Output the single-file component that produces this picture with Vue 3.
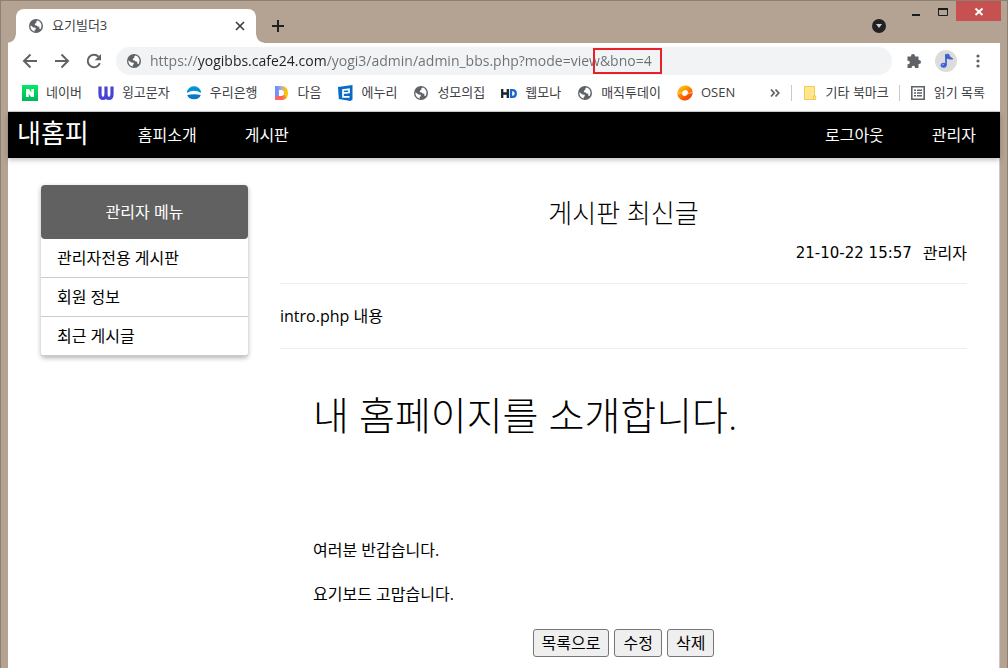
<script setup>
import { ref } from 'vue'

const address = ref('https://yogibbs.cafe24.com/yogi3/admin/admin_bbs.php?mode=view&bno=4')
const bookmarks = [
  { label: '네이버', icon: 'naver' },
  { label: '윙고문자', icon: 'wingo' },
  { label: '우리은행', icon: 'woori' },
  { label: '다음', icon: 'daum' },
  { label: '에누리', icon: 'enuri' },
  { label: '성모의집', icon: 'globe' },
  { label: '웹모나', icon: 'hd' },
  { label: '매직투데이', icon: 'globe' },
  { label: 'OSEN', icon: 'osen' },
]
const adminMenu = ['관리자전용 게시판', '회원 정보', '최근 게시글']
const actions = ['목록으로', '수정', '삭제']
</script>

<template>
  <div class="window">
    <svg class="defs" aria-hidden="true">
      <defs>
        <symbol id="globe" viewBox="0 0 16 16">
          <circle cx="8" cy="8" r="7" fill="#5f6368" />
          <path d="M9.600 2.500 8.200 3.600 8.400 5 7 5.600 6.800 7.200 8.300 7.300 9.600 8.600 11.400 8.800 11.200 10.600 12.400 11.200C14.600 8.400 13.600 3.600 9.600 2.500ZM2.500 7.200 5.400 9.400 7.700 9.700 7.800 11.200 6.600 12 6.800 13.400C4.200 13 2 10.500 2.500 7.200Z" fill="#fff" />
        </symbol>
      </defs>
    </svg>

    <header class="titlebar">
      <div class="tab">
        <svg class="i16"><use href="#globe" /></svg>
        <span class="tab-title">요기빌더3</span>
        <button class="icon-btn" aria-label="탭 닫기">
          <svg class="i16" viewBox="0 0 16 16"><path d="M4 4l8 8M12 4l-8 8" stroke="#3c4043" stroke-width="1.700" /></svg>
        </button>
      </div>
      <button class="icon-btn new-tab" aria-label="새 탭">
        <svg class="i16" viewBox="0 0 16 16"><path d="M8 2v12M2 8h12" stroke="#202124" stroke-width="2" /></svg>
      </button>
      <button class="icon-btn tab-search" aria-label="탭 검색">
        <svg class="i16" viewBox="0 0 16 16"><circle cx="8" cy="8" r="7" fill="#202124" /><path d="M5 6h6l-3 4z" fill="#d8cfc6" /></svg>
      </button>
      <div class="controls">
        <button class="icon-btn" aria-label="최소화">
          <svg class="i16" viewBox="0 0 16 16"><path d="M4 12h8" stroke="#1b1b1b" stroke-width="2" /></svg>
        </button>
        <button class="icon-btn" aria-label="최대화">
          <svg class="i16" viewBox="0 0 16 16"><path d="M3.500 5v7.500h9V5" fill="none" stroke="#1b1b1b" /><path d="M3 6h10" stroke="#1b1b1b" stroke-width="2" /></svg>
        </button>
        <button class="icon-btn close" aria-label="닫기">
          <svg class="i16" viewBox="0 0 16 16"><path d="M4.500 5.500l7 6.500M11.500 5.500l-7 6.500" stroke="#fff" stroke-width="2" /></svg>
        </button>
      </div>
    </header>

    <div class="client">
      <div class="toolbar">
        <button class="icon-btn" aria-label="뒤로">
          <svg class="i16" viewBox="0 0 16 16"><path d="M15 8H2.500M8.500 1.500 2 8l6.500 6.500" fill="none" stroke="#5f6368" stroke-width="2" /></svg>
        </button>
        <button class="icon-btn" aria-label="앞으로">
          <svg class="i16" viewBox="0 0 16 16"><path d="M1 8h12.500M7.500 1.500 14 8l-6.500 6.500" fill="none" stroke="#5f6368" stroke-width="2" /></svg>
        </button>
        <button class="icon-btn" aria-label="새로고침">
          <svg class="i16" viewBox="0 0 16 16"><path d="M13.800 10.200A6.200 6.200 0 1 1 12.500 3.800" fill="none" stroke="#5f6368" stroke-width="2" /><path d="M15 1v6.300H8.700z" fill="#5f6368" /></svg>
        </button>
        <div class="omnibox">
          <svg class="i16"><use href="#globe" /></svg>
          <input v-model="address" class="url" type="text" aria-label="주소" spellcheck="false" />
          <span class="highlight"></span>
        </div>
        <button class="icon-btn ext" aria-label="확장 프로그램">
          <svg class="i16" viewBox="0 0 16 16"><path d="M1.500 3.500H5V3a2 2 0 0 1 4 0v.5h3.500V7h.5a2 2 0 0 1 0 4h-.5v4H9v-.6a1.700 1.700 0 0 0-3.400 0v.6H1.500v-3.800h.6a1.700 1.700 0 0 0 0-3.500h-.6z" fill="#5f6368" /></svg>
        </button>
        <button class="icon-btn avatar" aria-label="프로필">
          <svg class="i16" viewBox="0 0 16 16"><path d="M8 2v10" stroke="#2f55c4" stroke-width="1.600" /><path d="M7.300 1.500 10.500 1Q11 3.500 15 6 11 6.500 8 5z" fill="#3a63d8" stroke="#2f55c4" stroke-width=".6" /><ellipse cx="5.600" cy="12.300" rx="3" ry="2.500" fill="#3a63d8" /><path d="M4 12.500q.5-1.200 2-1.300" fill="none" stroke="#9db8ff" /></svg>
        </button>
        <button class="icon-btn" aria-label="메뉴">
          <svg class="i16" viewBox="0 0 16 16" fill="#5f6368"><circle cx="8" cy="3" r="1.600" /><circle cx="8" cy="8" r="1.600" /><circle cx="8" cy="13" r="1.600" /></svg>
        </button>
      </div>

      <nav class="bookmarks" aria-label="북마크">
        <a v-for="b in bookmarks" :key="b.label" href="#" class="bookmark">
          <svg v-if="b.icon === 'naver'" class="i16" viewBox="0 0 16 16">
            <defs><linearGradient id="ng" x2="0" y2="1"><stop stop-color="#00ea64" /><stop offset="1" stop-color="#04b45c" /></linearGradient></defs>
            <path d="M0 0h16v16H0z" fill="url(#ng)" /><path d="M4 4h3l2.300 3.500V4H12v8H9L6.700 8.500V12H4z" fill="#fff" />
          </svg>
          <svg v-else-if="b.icon === 'wingo'" class="i16" viewBox="0 0 16 16">
            <path d="M2 1.500V9q0 4.500 3 4.500T8 9V1.500M8 9q0 4.500 3 4.500t3-4.500V1.500" fill="none" stroke="#4945d4" stroke-width="3.200" />
          </svg>
          <svg v-else-if="b.icon === 'woori'" class="i16" viewBox="0 0 16 16">
            <path d="M1 7.500a7 6.500 0 0 1 14 0Q8 1 1 7.500z" fill="#25b1e8" /><path d="M1 8a7 6 0 0 1 14 0Q8 3.500 1 8z" fill="#078fd1" /><path d="M1.200 10q6.800-1.500 13.600 0a7 5.500 0 0 1-13.600 0z" fill="#0879c4" />
          </svg>
          <svg v-else-if="b.icon === 'daum'" class="i16" viewBox="0 0 16 16">
            <defs><linearGradient id="dg"><stop stop-color="#6d92fa" /><stop offset=".5" stop-color="#b6a9d2" /><stop offset="1" stop-color="#ffc400" /></linearGradient><linearGradient id="db"><stop stop-color="#ef6a80" /><stop offset=".6" stop-color="#ff6548" /><stop offset="1" stop-color="#ffc400" /></linearGradient></defs>
            <path d="M3 3h4q5 0 5 5t-5 5H3z" fill="none" stroke="url(#dg)" stroke-width="4" /><path d="M1 11h6.500q1.600 0 2.200-1l3.600 2Q11.500 15 7 15H1z" fill="url(#db)" />
          </svg>
          <svg v-else-if="b.icon === 'enuri'" class="i16" viewBox="0 0 16 16">
            <path d="M0 2 14.500 0v14.500L12.500 16 .8 14z" fill="#086cc7" /><path d="M5 8.200 11 7.600V4.300L5 5v6.800h6.500" fill="none" stroke="#fff" stroke-width="1.700" />
          </svg>
          <svg v-else-if="b.icon === 'hd'" class="i16" viewBox="0 0 16 16">
            <path d="M1.200 4v9M6.800 4v9M1 8.500h6" stroke="#1d242c" stroke-width="2.300" /><path d="M10 5.100h1.500q3.300 0 3.300 3.400t-3.300 3.400H10z" fill="none" stroke="#1769d2" stroke-width="2.300" />
          </svg>
          <svg v-else-if="b.icon === 'osen'" class="i16" viewBox="0 0 16 16">
            <defs><linearGradient id="og" x2="0" y2="1"><stop stop-color="#ffb000" /><stop offset="1" stop-color="#f94a08" /></linearGradient></defs>
            <ellipse cx="8" cy="8" rx="5.500" ry="5" transform="rotate(-35 8 8)" fill="none" stroke="url(#og)" stroke-width="4.600" /><path d="M0 8.500q3-1 6-.5M10 8.500q3 0 6-1.500" fill="none" stroke="#ffd9a8" stroke-width=".8" />
          </svg>
          <svg v-else class="i16"><use href="#globe" /></svg>
          <span>{{ b.label }}</span>
        </a>
        <button class="icon-btn more" aria-label="북마크 더보기">
          <svg class="i16" viewBox="0 0 16 16"><path d="m4 4.500 3.200 3.500L4 11.500M8.500 4.500 11.700 8l-3.200 3.500" fill="none" stroke="#5f6368" stroke-width="1.800" /></svg>
        </button>
        <span class="rule"></span>
        <a href="#" class="bookmark">
          <svg class="i16" viewBox="0 0 16 16"><path d="M2.500 1.500h10v9.500h1.200v3.500H2.500z" fill="#ffe68f" stroke="#efca55" /><path d="M11.500 14.500v-3.500h2" fill="none" stroke="#efca55" /></svg>
          <span>기타 북마크</span>
        </a>
        <span class="rule"></span>
        <a href="#" class="bookmark">
          <svg class="i16" viewBox="0 0 16 16"><path d="M1.800 1.800h12.400v12.400H1.800z" fill="none" stroke="#5f6368" stroke-width="1.600" /><path d="M4 5.200h2M4 8h2M4 10.800h2M7 5.200h5M7 8h5M7 10.800h5" stroke="#5f6368" stroke-width="1.500" /></svg>
          <span>읽기 목록</span>
        </a>
      </nav>

      <div class="page">
        <nav class="site-nav">
          <a href="#" class="brand">내홈피</a>
          <a href="#">홈피소개</a>
          <a href="#">게시판</a>
          <a href="#" class="push">로그아웃</a>
          <a href="#">관리자</a>
        </nav>
        <div class="columns">
          <aside class="card">
            <h2>관리자 메뉴</h2>
            <ul>
              <li v-for="m in adminMenu" :key="m"><a href="#">{{ m }}</a></li>
            </ul>
          </aside>
          <main>
            <h1>게시판 최신글</h1>
            <p class="meta"><time>21-10-22 15:57</time><span>관리자</span></p>
            <p class="subject">intro.php 내용</p>
            <article>
              <h2>내 홈페이지를 소개합니다.</h2>
              <p>여러분 반갑습니다.</p>
              <p>요기보드 고맙습니다.</p>
            </article>
            <div class="actions">
              <button v-for="a in actions" :key="a">{{ a }}</button>
            </div>
          </main>
        </div>
      </div>
    </div>
  </div>
</template>

<style>
body { background: #b4a392; }
</style>

<style scoped>
* { box-sizing: border-box; }
.window {
  min-height: 100vh;
  display: flex;
  flex-direction: column;
  padding: 0 7px;
  background: #b4a392;
  border: 1px solid #8c8073;
  border-bottom: 0;
  font-family: "Open Sans", "Noto Sans CJK KR", sans-serif;
}
.defs { position: absolute; width: 0; height: 0; }
.i16 { width: 16px; height: 16px; display: block; flex: none; }
.icon-btn { display: flex; padding: 0; border: 0; background: none; flex: none; }
a { color: inherit; text-decoration: none; }

.titlebar { display: flex; align-items: flex-end; height: 42px; padding-left: 8px; }
.tab {
  position: relative;
  display: flex;
  align-items: center;
  gap: 8px;
  width: 240px;
  height: 34px;
  padding: 0 8px 0 12px;
  background: #fff;
  border-radius: 8px 8px 0 0;
  font-size: 13px;
  line-height: 18px;
  color: #3c4043;
}
.tab::before, .tab::after { content: ""; position: absolute; bottom: 0; width: 8px; height: 8px; }
.tab::before { right: 100%; background: radial-gradient(circle at 0 0, #b4a392 7px, #fff 8px); }
.tab::after { left: 100%; background: radial-gradient(circle at 100% 0, #b4a392 7px, #fff 8px); }
.tab-title { flex: 1; padding-bottom: 2px; }
.new-tab { margin: 0 0 9px 14px; }
.tab-search { margin: 0 21px 9px auto; }
.controls { display: flex; align-self: flex-start; align-items: center; gap: 11px; margin-right: -1px; }
.close { width: 45px; height: 20px; margin-left: -6px; justify-content: center; align-items: center; background: #c75050; }

.client { flex: 1; display: flex; flex-direction: column; background: #fff; }
.toolbar { display: flex; align-items: center; gap: 16px; height: 36px; padding: 0 14px; }
.omnibox {
  position: relative;
  flex: 1;
  display: flex;
  align-items: center;
  gap: 8px;
  height: 28px;
  margin-left: -2px;
  padding: 0 10px;
  border-radius: 14px;
  background: #f1f3f4;
}
.url {
  flex: 1;
  min-width: 0;
  padding: 0;
  border: 0;
  outline: 0;
  font: 14px/24px "Open Sans", sans-serif;
  color: transparent;
  background: linear-gradient(90deg, #6b7075 47px, #202124 47px, #202124 176px, #6b7075 176px) text;
}
.highlight { position: absolute; left: 477px; top: 1px; width: 69px; height: 26px; border: 2px solid #e8202a; pointer-events: none; }
.ext { margin-left: -2px; }
.avatar { width: 22px; height: 22px; margin: 0 -3px; justify-content: center; align-items: center; border-radius: 11px; background: #dcdcdc; }

.bookmarks {
  display: flex;
  align-items: center;
  height: 33px;
  padding: 0 7px 4px 6px;
  border-bottom: 1px solid #d0d2d4;
  font-size: 13px;
  line-height: 18px;
  color: #3c4043;
  white-space: nowrap;
}
.bookmark { display: flex; align-items: center; gap: 8px; padding: 0 8px; }
.bookmark span { padding-bottom: 2px; }
.more { margin-left: auto; margin-right: 6px; }
.rule { width: 1px; height: 16px; background: #c8cacc; margin: 0 2px; }

.page { flex: 1; border-right: 1px solid #c8c8c8; color: #000; font-size: 16px; line-height: 24px; }
.site-nav {
  display: flex;
  align-items: center;
  height: 46px;
  margin-right: -1px;
  background: #000;
  color: #fff;
  box-shadow: 0 2px 5px rgba(0, 0, 0, .25);
}
.site-nav a { padding: 0 24px; }
.site-nav .brand { padding: 0 25px 4px 9px; font-size: 26px; }
.site-nav .push { margin-left: auto; }
.columns { display: flex; align-items: flex-start; gap: 32px; padding: 27px 32px 8px 33px; }
.card { width: 207px; flex: none; border-radius: 4px; box-shadow: 0 2px 5px rgba(0, 0, 0, .3); }
.card h2 {
  margin: 0;
  padding: 15px;
  border-radius: 4px;
  background: #616161;
  color: #fff;
  font-size: 16px;
  font-weight: 400;
  text-align: center;
}
.card ul { margin: 0; padding: 0; list-style: none; }
.card li { padding: 7px 16px; border-bottom: 1px solid #ccc; }
main { flex: 1; min-width: 0; }
h1 { margin: 8px 0 0; font-size: 26px; line-height: 40px; font-weight: 300; text-align: center; }
.meta { display: flex; justify-content: flex-end; align-items: center; gap: 11px; margin: 8px 0 0; padding-bottom: 18px; }
.meta time { font: 15px/24px "DejaVu Sans", sans-serif; }
.subject { margin: 0; padding: 20px 0; border: 1px solid #eee; border-width: 1px 0; }
article { padding: 0 33px; }
article h2 { margin: 36px 0 93px; font-size: 39px; line-height: 60px; font-weight: 300; }
article p { margin: 0 0 20px; }
.actions { display: flex; justify-content: center; gap: 5px; padding-top: 3px; }
.actions button {
  height: 28px;
  padding: 0 8px;
  border: 1px solid #767676;
  border-radius: 3px;
  background: #efefef;
  color: #000;
  font: 16px/24px "Open Sans", "Noto Sans CJK KR", sans-serif;
}
</style>
